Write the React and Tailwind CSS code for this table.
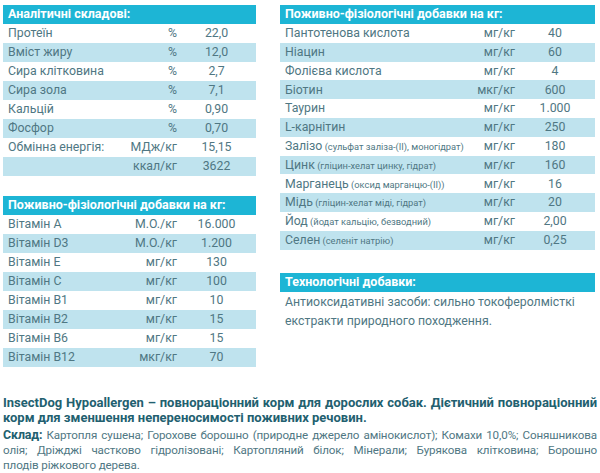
const analytic = [
  ["Протеїн", "%", "22,0"],
  ["Вміст жиру", "%", "12,0"],
  ["Сира клітковина", "%", "2,7"],
  ["Сира зола", "%", "7,1"],
  ["Кальцій", "%", "0,90"],
  ["Фосфор", "%", "0,70"],
  ["Обмінна енергія:", "МДж/кг", "15,15"],
  ["", "ккал/кг", "3622"],
];

const vitamins = [
  ["Вітамін A", "М.О./кг", "16.000"],
  ["Вітамін D3", "М.О./кг", "1.200"],
  ["Вітамін E", "мг/кг", "130"],
  ["Вітамін C", "мг/кг", "100"],
  ["Вітамін B1", "мг/кг", "10"],
  ["Вітамін B2", "мг/кг", "15"],
  ["Вітамін B6", "мг/кг", "15"],
  ["Вітамін B12", "мкг/кг", "70"],
];

const supplements = [
  ["Пантотенова кислота", "", "мг/кг", "40"],
  ["Ніацин", "", "мг/кг", "60"],
  ["Фолієва кислота", "", "мг/кг", "4"],
  ["Біотин", "", "мкг/кг", "600"],
  ["Таурин", "", "мг/кг", "1.000"],
  ["L-карнітин", "", "мг/кг", "250"],
  ["Залізо", "(сульфат заліза-(II), моногідрат)", "мг/кг", "180"],
  ["Цинк", "(гліцин-хелат цинку, гідрат)", "мг/кг", "160"],
  ["Марганець", "(оксид марганцю-(II))", "мг/кг", "16"],
  ["Мідь", "(гліцин-хелат міді, гідрат)", "мг/кг", "20"],
  ["Йод", "(йодат кальцію, безводний)", "мг/кг", "2,00"],
  ["Селен", "(селеніт натрію)", "мг/кг", "0,25"],
];

const Header = ({ children }) => (
  <div className="h-[19px] bg-[#1db5d5] pl-[5px] flex items-center text-white font-bold text-[12.5px]">
    {children}
  </div>
);

const LeftTable = ({ title, rows }) => (
  <div className="flex flex-col">
    <Header>{title}</Header>
    {rows.map(([label, unit, value], i) => (
      <div
        key={i}
        className={`h-[19px] flex items-center text-[12.3px] ${i % 2 ? "bg-[#bfe3ee]" : ""}`}
      >
        <div className="flex-1 pl-[5px]">{label}</div>
        <div className="text-right">{unit}</div>
        <div className="w-[79px] text-center">{value}</div>
      </div>
    ))}
  </div>
);

// justified line, last line of a paragraph stays left
const Line = ({ children, last }) => (
  <span className={`block ${last ? "" : "text-justify [text-align-last:justify]"}`}>{children}</span>
);

export default function App() {
  return (
    <div
      className="w-[600px] h-[473px] bg-white text-[#4f7783] overflow-hidden"
      style={{ fontFamily: "Roboto, 'Noto Sans', sans-serif" }}
    >
      <div className="flex pt-[5px] pl-[3px]">
        <div className="w-[253px] flex flex-col gap-[20px]">
          <LeftTable title="Аналітичні складові:" rows={analytic} />
          <LeftTable title="Поживно-фізіологічні добавки на кг:" rows={vitamins} />
        </div>
        <div className="ml-[24px] w-[315px] flex flex-col">
          <Header>Поживно-фізіологічні добавки на кг:</Header>
          {supplements.map(([label, note, unit, value], i) => (
            <div
              key={i}
              className={`h-[18.8px] flex items-center text-[12.3px] ${i % 2 ? "bg-[#bfe3ee]" : ""}`}
            >
              <div className="flex-1 pl-[5px] whitespace-nowrap">
                {label}
                {note && <span className="text-[9.3px]"> {note}</span>}
              </div>
              <div className="text-right">{unit}</div>
              <div className="w-[80px] text-center">{value}</div>
            </div>
          ))}
          <div className="mt-[23px]">
            <Header>Технологічні добавки:</Header>
            <p className="pl-[5px] pt-[1px] text-[12.3px] leading-[19px]">
              Антиоксидативні засоби: сильно токоферолмісткі
              <br />
              екстракти природного походження.
            </p>
          </div>
        </div>
      </div>
      <div className="mt-[28px] ml-[3px] w-[594px] whitespace-nowrap">
        <div className="font-bold text-[13px] leading-[15.3px] text-[#22606f]">
          <Line>InsectDog Hypoallergen – повнораціонний корм для дорослих собак. Дієтичний повнораціонний</Line>
          <Line last>корм для зменшення непереносимості поживних речовин.</Line>
        </div>
        <div className="mt-[1px] text-[11.6px] leading-[15.3px] tracking-[-0.1px]">
          <Line>
            <span className="font-bold text-[12.4px] text-[#22606f]">Склад:</span> Картопля сушена; Горохове борошно (природне джерело амінокислот); Комахи 10,0%; Соняшникова
          </Line>
          <Line>олія; Дріжджі частково гідролізовані; Картопляний білок; Мінерали; Бурякова клітковина; Борошно</Line>
          <Line last>плодів ріжкового дерева.</Line>
        </div>
      </div>
    </div>
  );
}
